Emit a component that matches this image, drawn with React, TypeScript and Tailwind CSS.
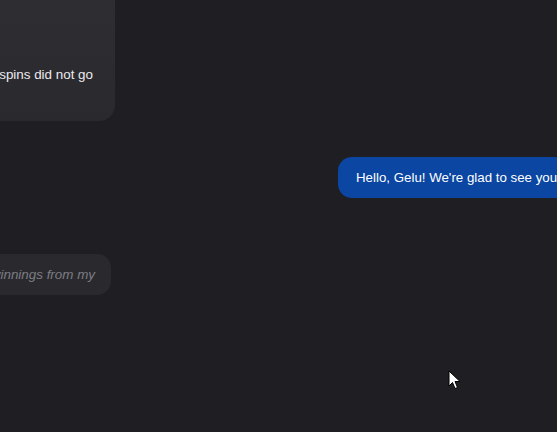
const font = { fontFamily: '"Liberation Sans", Arial, sans-serif' };

export default function App() {
  return (
    <div className="relative h-[432px] w-[557px] overflow-hidden bg-[#1f1f23]" style={font}>
      <div className="flex flex-col">
        {/* earlier incoming message, cut at the top */}
        <div className="ml-[-300px] flex h-[121px] w-[415px] items-end justify-end rounded-br-2xl bg-gradient-to-b from-[#2e2d32] to-[#2a2a2e] pb-[36px] pr-[22px]">
          <p className="whitespace-nowrap text-[13.4px] leading-5 text-[#ececef]">
            the free spins did not go
          </p>
        </div>

        {/* outgoing */}
        <div className="ml-[338px] mt-[36px] flex h-[41px] w-[300px] items-center rounded-l-[14px] bg-[#0a46a2] pl-[18px]">
          <p className="whitespace-nowrap text-[13.3px] leading-5 text-white">Hello, Gelu! We're glad to see you</p>
        </div>

        {/* draft */}
        <div className="ml-[-200px] mt-[56px] flex h-[41px] w-[311px] items-center justify-end rounded-r-[14px] bg-[#2a2a2e] pr-[16px]">
          <p className="whitespace-nowrap text-[13.4px] leading-5 italic text-[#7d7d84]">I want my winnings from my</p>
        </div>
      </div>

      <svg className="absolute left-[448px] top-[370px]" width="13" height="20" viewBox="0 0 13 20">
        <path d="M1 1 L1 16 L4.5 12.5 L7 18.5 L9.5 17.5 L7 11.5 L12 11.5 Z" fill="#fff" stroke="#000" strokeWidth="1" />
      </svg>
    </div>
  );
}
